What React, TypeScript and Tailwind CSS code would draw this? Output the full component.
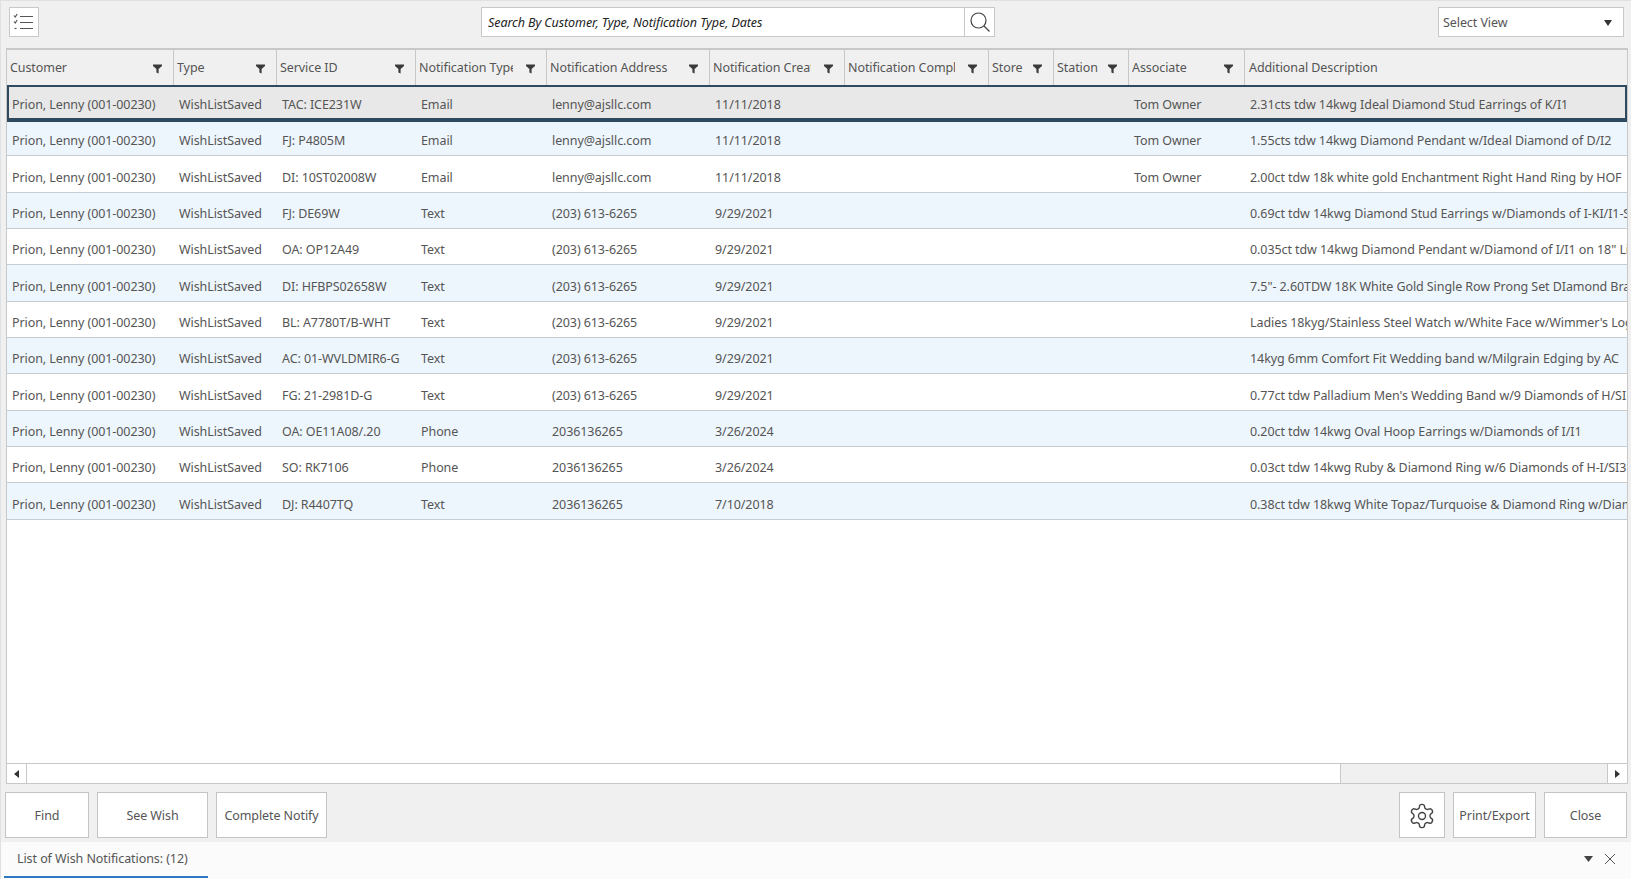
import React from "react";

const widths = ["w-[167px]", "w-[103px]", "w-[139px]", "w-[131px]", "w-[163px]", "w-[135px]", "w-[144px]", "w-[65px]", "w-[75px]", "w-[116px]"];
const headers = ["Customer", "Type", "Service ID", "Notification Type", "Notification Address", "Notification Created", "Notification Completed", "Store", "Station", "Associate"];
const clips = ["mr-[6px]", "mr-[6px]", "mr-[6px]", "mr-[13px]", "mr-[6px]", "mr-[13px]", "mr-[13px]", "mr-[4px]", "mr-[4px]", "mr-[6px]"];

const rows: string[][] = [
  ["TAC: ICE231W", "Email", "lenny@ajsllc.com", "11/11/2018", "Tom Owner", "2.31cts tdw 14kwg Ideal Diamond Stud Earrings of K/I1"],
  ["FJ: P4805M", "Email", "lenny@ajsllc.com", "11/11/2018", "Tom Owner", "1.55cts tdw 14kwg Diamond Pendant w/Ideal Diamond of D/I2"],
  ["DI: 10ST02008W", "Email", "lenny@ajsllc.com", "11/11/2018", "Tom Owner", "2.00ct tdw 18k white gold Enchantment Right Hand Ring by HOF"],
  ["FJ: DE69W", "Text", "(203) 613-6265", "9/29/2021", "", "0.69ct tdw 14kwg Diamond Stud Earrings w/Diamonds of I-KI/I1-SI2"],
  ["OA: OP12A49", "Text", "(203) 613-6265", "9/29/2021", "", "0.035ct tdw 14kwg Diamond Pendant w/Diamond of I/I1 on 18\" Link"],
  ["DI: HFBPS02658W", "Text", "(203) 613-6265", "9/29/2021", "", "7.5\"- 2.60TDW 18K White Gold Single Row Prong Set DIamond Bracelet"],
  ["BL: A7780T/B-WHT", "Text", "(203) 613-6265", "9/29/2021", "", "Ladies 18kyg/Stainless Steel Watch w/White Face w/Wimmer's Logo"],
  ["AC: 01-WVLDMIR6-G", "Text", "(203) 613-6265", "9/29/2021", "", "14kyg 6mm Comfort Fit Wedding band w/Milgrain Edging by AC"],
  ["FG: 21-2981D-G", "Text", "(203) 613-6265", "9/29/2021", "", "0.77ct tdw Palladium Men's Wedding Band w/9 Diamonds of H/SI1"],
  ["OA: OE11A08/.20", "Phone", "2036136265", "3/26/2024", "", "0.20ct tdw 14kwg Oval Hoop Earrings w/Diamonds of I/I1"],
  ["SO: RK7106", "Phone", "2036136265", "3/26/2024", "", "0.03ct tdw 14kwg Ruby & Diamond Ring w/6 Diamonds of H-I/SI3"],
  ["DJ: R4407TQ", "Text", "2036136265", "7/10/2018", "", "0.38ct tdw 18kwg White Topaz/Turquoise & Diamond Ring w/Diamonds"],
];

function Funnel() {
  return (
    <svg width="9" height="10" viewBox="0 0 9 10" className="shrink-0">
      <path d="M0 0.5H9V2L5.6 5V9.5L3.4 8.5V5L0 2Z" fill="#3a3a3a" />
    </svg>
  );
}

function Btn({ children, className }: { children: React.ReactNode; className: string }) {
  return (
    <div className={`h-[46px] pt-[2px] bg-white border border-[#c4c4c4] flex items-center justify-center text-[#555] ${className}`}>
      {children}
    </div>
  );
}

function Cell({ w, children }: { w: string; children?: React.ReactNode }) {
  return <div className={`${w} shrink-0 pl-[5px] whitespace-nowrap overflow-hidden`}>{children}</div>;
}

export default function App() {
  return (
    <div className="w-[1631px] h-[879px] overflow-hidden bg-[#f0f0f0] flex flex-col text-[12.5px] tracking-[-0.08px] text-[#555] border-t border-l border-[#dde1e4] [font-family:'Noto_Sans',sans-serif]">
      <div className="h-[47px] shrink-0 flex items-start pl-[8px] pr-[7px] pt-[6px]">
        <div className="w-[30px] h-[30px] bg-white border border-[#c8c8c8] flex items-center justify-center">
          <svg width="22" height="18" viewBox="0 0 22 18" fill="none" stroke="#555" strokeWidth="1.2">
            <path d="M7 3.5H20M7 9.5H20M7 15.5H20" />
            <path d="M1 2.5L2.2 4L4.2 1M1 8.5L2.2 10L4.2 7" />
            <path d="M1.5 15.5H3.5" />
          </svg>
        </div>
        <div className="flex h-[30px] w-[514px] ml-[442px] bg-white border border-[#c8c8c8]">
          <div className="flex-1 pl-[6px] pt-[2px] flex items-center italic text-[#222]">Search By Customer, Type, Notification Type, Dates</div>
          <div className="w-[30px] border-l border-[#c8c8c8] flex items-center justify-center">
            <svg width="22" height="22" viewBox="0 0 22 22" fill="none" stroke="#444" strokeWidth="1.2">
              <circle cx="9.5" cy="9.5" r="7.5" />
              <path d="M15 15L20.5 20.5" />
            </svg>
          </div>
        </div>
        <div className="flex-1" />
        <div className="w-[186px] h-[30px] pt-[2px] bg-white border border-[#c8c8c8] flex items-center justify-between pl-[4px] pr-[11px]">
          <span>Select View</span>
          <svg width="8" height="6" viewBox="0 0 8 6"><path d="M0 0H8L4 6Z" fill="#333" /></svg>
        </div>
      </div>

      <div className="h-[736px] shrink-0 ml-[5px] mr-[3px] bg-white border-l border-r border-b border-[#c8c8c8] flex flex-col">
        <div className="h-[37px] shrink-0 flex bg-[#f0f0f0] border-t-2 border-[#c8c8c8]">
          {headers.map((h, i) => (
            <div key={h} className={`${widths[i]} shrink-0 border-r border-[#c8c8c8] pt-[2px] pl-[3px] pr-[11px] flex items-center`}>
              <span className={`overflow-hidden whitespace-nowrap flex-1 min-w-0 ${clips[i]}`}>{h}</span>
              <Funnel />
            </div>
          ))}
          <div className="flex-1 pl-[4px] pt-[2px] flex items-center">Additional Description</div>
        </div>
        <div className="flex-1 min-h-0 flex flex-col">
          {rows.map((r, i) => (
            <div
              key={i}
              className={`shrink-0 flex items-center box-border ${
                i === 0
                  ? "h-[35px] pt-[5px] relative bg-[#e8e8e8] ring-2 ring-inset ring-[#2f4a5e] shadow-[0_2px_0_#2f4a5e]"
                  : `h-[36.35px] pt-[8px] border-b border-[#c6ccd0] ${i % 2 === 1 ? "bg-[#eef6fd]" : "bg-white"}`
              }`}
            >
              <Cell w={widths[0]}>Prion, Lenny (001-00230)</Cell>
              <Cell w={widths[1]}>WishListSaved</Cell>
              <Cell w={widths[2]}>{r[0]}</Cell>
              <Cell w={widths[3]}>{r[1]}</Cell>
              <Cell w={widths[4]}>{r[2]}</Cell>
              <Cell w={widths[5]}>{r[3]}</Cell>
              <Cell w={widths[6]} />
              <Cell w={widths[7]} />
              <Cell w={widths[8]} />
              <Cell w={widths[9]}>{r[4]}</Cell>
              <div className="flex-1 min-w-0 pl-[5px] pr-[2px] whitespace-nowrap overflow-hidden">{r[5]}</div>
            </div>
          ))}
        </div>
        <div className="h-[20px] shrink-0 flex border-t border-[#c8c8c8] bg-[#f0f0f0]">
          <div className="w-[20px] bg-white border-r border-[#c8c8c8] flex items-center justify-center">
            <svg width="5" height="8" viewBox="0 0 5 8"><path d="M5 0V8L0 4Z" fill="#333" /></svg>
          </div>
          <div className="w-[1314px] bg-white border-r border-[#c8c8c8]" />
          <div className="flex-1" />
          <div className="w-[20px] bg-white border-l border-[#c8c8c8] flex items-center justify-center">
            <svg width="5" height="8" viewBox="0 0 5 8"><path d="M0 0V8L5 4Z" fill="#333" /></svg>
          </div>
        </div>
      </div>

      <div className="h-[58px] shrink-0 flex items-start pt-[8px] gap-[8px] pl-[4px] pr-[4px]">
        <Btn className="w-[84px]">Find</Btn>
        <Btn className="w-[111px]">See Wish</Btn>
        <Btn className="w-[111px]">Complete Notify</Btn>
        <div className="flex-1" />
        <Btn className="w-[46px]">
          <svg width="28" height="28" viewBox="0 0 24 24" fill="none" stroke="#444" strokeWidth="1.2" strokeLinejoin="round">
            <path d="M12.22 2h-.44a2 2 0 0 0-2 2v.18a2 2 0 0 1-1 1.73l-.43.25a2 2 0 0 1-2 0l-.15-.08a2 2 0 0 0-2.73.73l-.22.38a2 2 0 0 0 .73 2.73l.15.1a2 2 0 0 1 1 1.72v.51a2 2 0 0 1-1 1.74l-.15.09a2 2 0 0 0-.73 2.73l.22.38a2 2 0 0 0 2.73.73l.15-.08a2 2 0 0 1 2 0l.43.25a2 2 0 0 1 1 1.73V20a2 2 0 0 0 2 2h.44a2 2 0 0 0 2-2v-.18a2 2 0 0 1 1-1.73l.43-.25a2 2 0 0 1 2 0l.15.08a2 2 0 0 0 2.73-.73l.22-.39a2 2 0 0 0-.73-2.73l-.15-.08a2 2 0 0 1-1-1.74v-.5a2 2 0 0 1 1-1.74l.15-.09a2 2 0 0 0 .73-2.73l-.22-.38a2 2 0 0 0-2.73-.73l-.15.08a2 2 0 0 1-2 0l-.43-.25a2 2 0 0 1-1-1.73V4a2 2 0 0 0-2-2z" />
            <circle cx="12" cy="12" r="3" />
          </svg>
        </Btn>
        <Btn className="w-[83px]">Print/Export</Btn>
        <Btn className="w-[83px]">Close</Btn>
      </div>

      <div className="flex-1 min-h-0 bg-[#fbfbfb] flex items-center justify-between relative pb-[3px] pl-[16px] pr-[15px]">
        <span>List of Wish Notifications: (12)</span>
        <div className="flex items-center gap-[11px]">
          <svg width="9" height="6" viewBox="0 0 9 6"><path d="M0 0H9L4.5 6Z" fill="#444" /></svg>
          <svg width="12" height="12" viewBox="0 0 12 12" stroke="#555" strokeWidth="1"><path d="M1 1L11 11M11 1L1 11" /></svg>
        </div>
        <div className="absolute left-[3px] bottom-[1px] w-[204px] h-[2px] bg-[#2f78c4]" />
      </div>
    </div>
  );
}
